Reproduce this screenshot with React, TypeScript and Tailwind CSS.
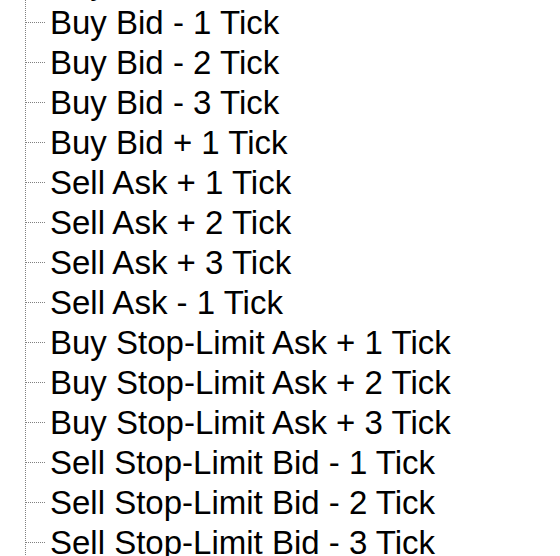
import React from "react";

const items = [
  "Buy Bid",
  "Buy Bid - 1 Tick",
  "Buy Bid - 2 Tick",
  "Buy Bid - 3 Tick",
  "Buy Bid + 1 Tick",
  "Sell Ask + 1 Tick",
  "Sell Ask + 2 Tick",
  "Sell Ask + 3 Tick",
  "Sell Ask - 1 Tick",
  "Buy Stop-Limit Ask + 1 Tick",
  "Buy Stop-Limit Ask + 2 Tick",
  "Buy Stop-Limit Ask + 3 Tick",
  "Sell Stop-Limit Bid - 1 Tick",
  "Sell Stop-Limit Bid - 2 Tick",
  "Sell Stop-Limit Bid - 3 Tick",
  "Sell Stop-Limit Bid + 1 Tick",
];

export default function App() {
  return (
    <div className="w-[560px] h-[556px] overflow-hidden bg-white relative">
      <div className="absolute left-[25px] top-0 w-px h-full bg-[repeating-linear-gradient(to_bottom,#808080_0_1px,transparent_1px_2px)]" />
      <ul className="mt-[-38px] pl-[26px] flex flex-col">
        {items.map((t) => (
          <li key={t} className="h-[40px] flex items-center">
            <span className="w-[20px] h-px mr-[4px] bg-[repeating-linear-gradient(to_right,#808080_0_1px,transparent_1px_2px)]" />
            <span className="relative top-[1px] text-[33px] leading-[40px] text-black whitespace-nowrap font-['Liberation_Sans',Arial,sans-serif]">
              {t}
            </span>
          </li>
        ))}
      </ul>
    </div>
  );
}
